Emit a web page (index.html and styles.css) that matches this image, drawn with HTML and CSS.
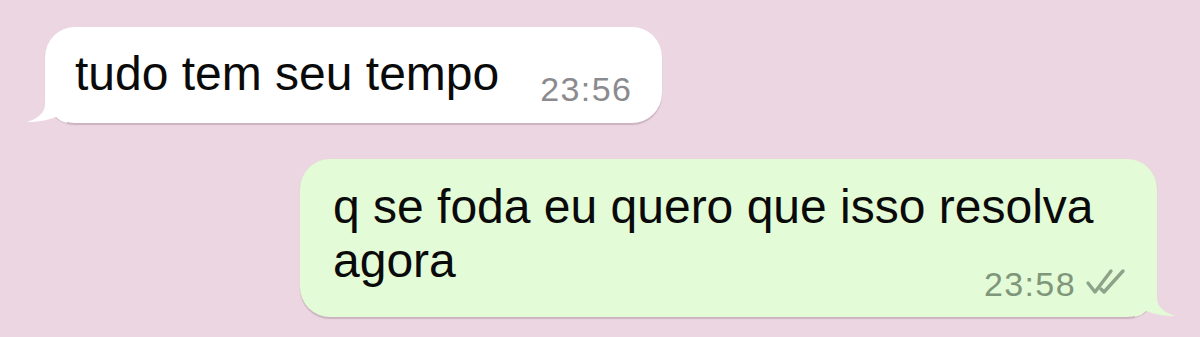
FILE: index.html
```html
<!DOCTYPE html>
<html lang="pt">
<head>
<meta charset="utf-8">
<link rel="stylesheet" href="styles.css">
</head>
<body>
<div class="chat">
  <div class="bubble incoming">
    <svg class="tail tail-in" width="40" height="42" viewBox="0 0 40 42"><path d="M18 0 L18 22 C18 30 12 36 0 40 C10 40 22 38 29 35 C32 38 35 40 40 41 L40 0 Z" fill="#ffffff"/></svg>
    <span class="text">tudo tem seu tempo</span><span class="meta meta-in">23:56</span>
  </div>
  <div class="bubble outgoing">
    <svg class="tail tail-out" width="40" height="42" viewBox="0 0 40 42"><path d="M22 0 L22 22 C22 30 28 36 40 40 C30 40 18 38 11 35 C8 38 5 40 0 41 L0 0 Z" fill="#e3fbd6"/></svg>
    <span class="text">q se foda eu quero que isso resolva agora</span><span class="meta meta-out">23:58<svg class="ticks" width="42" height="28" viewBox="0 0 42 28"><path d="M3 15 L10 24 L26 3" fill="none" stroke="#8ea38a" stroke-width="3.4" stroke-linecap="round" stroke-linejoin="round"/><path d="M16 21 L19 24 L38 3" fill="none" stroke="#8ea38a" stroke-width="3.4" stroke-linecap="round" stroke-linejoin="round"/></svg></span>
  </div>
</div>
</body>
</html>
```

FILE: styles.css
```css
html, body {
  margin: 0;
  padding: 0;
}
body {
  background: #ecd6e1;
  width: 1200px;
  height: 337px;
  overflow: hidden;
  font-family: "Liberation Sans", Arial, sans-serif;
}
.chat {
  display: flex;
  flex-direction: column;
  padding: 27px 43px 0 45px;
}
.bubble {
  position: relative;
  border-radius: 30px;
  font-size: 48px;
  line-height: 54px;
  color: #0a0a0a;
  box-shadow: 0 1.5px 1px rgba(120, 90, 105, 0.28);
}
.incoming {
  align-self: flex-start;
  background: #ffffff;
  padding: 20px 30px 17px 30px;
}
.outgoing {
  align-self: flex-end;
  background: #e3fbd6;
  max-width: 857px;
  box-sizing: border-box;
  width: 857px;
  margin-top: 36px;
  padding: 21px 30px 16px 33px;
}
.text {
  position: relative;
  z-index: 1;
}
.meta {
  float: right;
  position: relative;
  z-index: 1;
  font-size: 34px;
  line-height: 34px;
  letter-spacing: 1.4px;
  display: flex;
  align-items: center;
}
.meta-in {
  color: #8b8b8f;
  margin-left: 41px;
  margin-top: 25px;
}
.meta-out {
  color: #7f967b;
  margin-top: 33px;
}
.ticks {
  margin-left: 9px;
  margin-top: -4px;
}
.tail {
  position: absolute;
  bottom: -1px;
}
.tail-in {
  left: -18px;
}
.tail-out {
  right: -18px;
}
```
